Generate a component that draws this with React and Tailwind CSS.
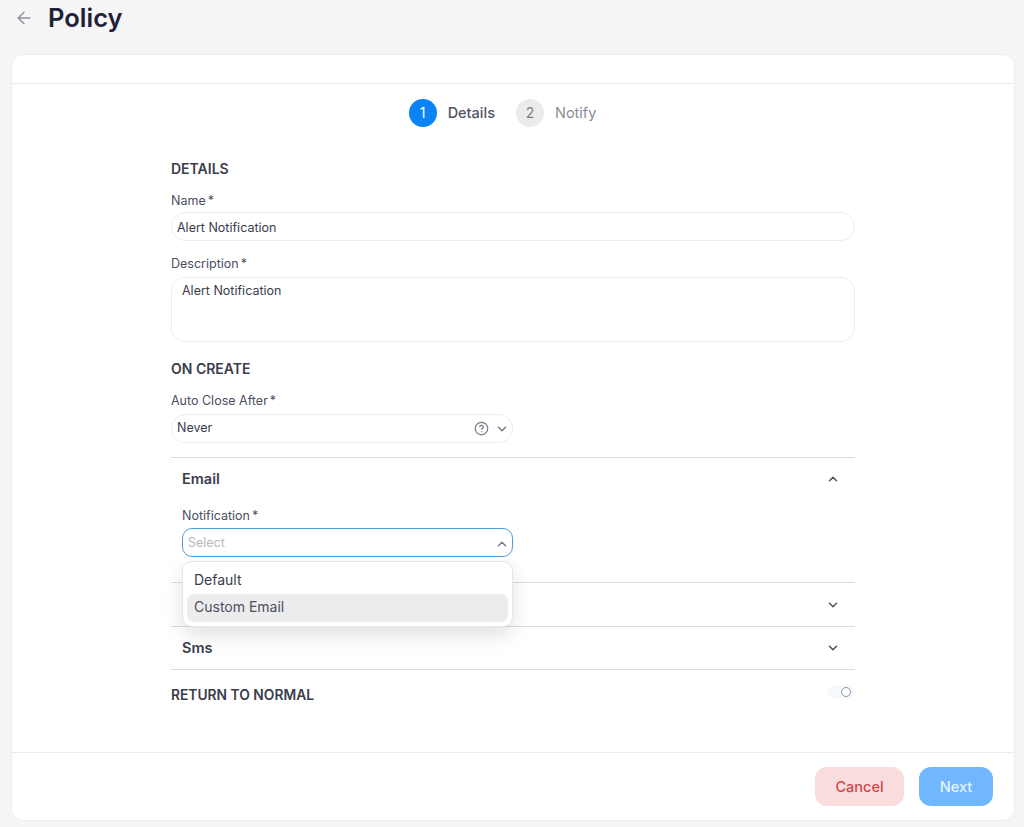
import { ArrowLeft, ChevronDown, ChevronUp, CircleHelp } from "lucide-react";

const Label = ({ children }) => (
  <div className="text-[12.5px] leading-[16px] text-[#4b4f5e]">
    {children}
    <span className="ml-[2px]">*</span>
  </div>
);

const AccordionRow = ({ title, open, small }) => (
  <div className={`flex items-center justify-between pl-[11px] pr-[15px] ${small ? "h-[42px]" : "h-[43px]"}`}>
    <span className="text-[14.5px] font-semibold text-[#3a3d4b]">{title}</span>
    {open ? (
      <ChevronUp className="h-[14px] w-[14px] text-[#4b4f5e]" strokeWidth={2.5} />
    ) : (
      <ChevronDown className="h-[14px] w-[14px] text-[#4b4f5e]" strokeWidth={2.5} />
    )}
  </div>
);

const App = () => {
  return (
    <div className="h-[827px] w-[1024px] overflow-hidden bg-[#f5f5f6] font-['Inter',sans-serif]">
      <div className="flex h-[54px] items-start pl-[14px] pt-[2px]">
        <ArrowLeft className="mt-[6px] h-[20px] w-[20px] text-[#8e909a]" strokeWidth={1.6} />
        <h1 className="ml-[14px] text-[25.5px] font-semibold leading-[32px] text-[#1e2238]">Policy</h1>
      </div>

      <div className="mx-[11px] flex h-[767px] w-[1004px] flex-col rounded-[12px] border border-[#eeeeef] bg-white">
        <div className="h-[29px] border-b border-[#ececed]"></div>

        <div className="flex-1">
          <div className="flex h-[57px] items-center justify-center pr-[21px]">
            <div className="flex h-[28px] w-[28px] items-center justify-center rounded-full bg-[#0a84f5] text-[14px] text-white">1</div>
            <span className="ml-[11px] text-[14.5px] font-medium text-[#4f5262]">Details</span>
            <div className="ml-[21px] flex h-[28px] w-[28px] items-center justify-center rounded-full bg-[#ebebeb] text-[14px] text-[#7d7f88]">2</div>
            <span className="ml-[11px] text-[14.5px] text-[#8a8c94]">Notify</span>
          </div>

          <div className="ml-[159px] w-[684px]">
            <h2 className="mt-[18px] text-[14px] font-semibold leading-[20px] text-[#3a3d4b]">DETAILS</h2>
            <div className="mt-[14px]">
              <Label>Name</Label>
            </div>
            <div className="mt-[3px] flex h-[29px] items-center rounded-[14px] border border-[#ececed] pl-[5px] pt-[3px] text-[12.5px] text-[#3a3d4b]">
              Alert Notification
            </div>
            <div className="mt-[15px]">
              <Label>Description</Label>
            </div>
            <div className="mt-[5px] h-[65px] rounded-[14px] border border-[#ececed] pl-[10px] pt-[4px] text-[12.5px] leading-[18px] text-[#3a3d4b]">
              Alert Notification
            </div>

            <h2 className="mt-[17px] text-[14px] font-semibold leading-[20px] text-[#3a3d4b]">ON CREATE</h2>
            <div className="mt-[14px]">
              <Label>Auto Close After</Label>
            </div>
            <div className="mt-[5px] flex h-[29px] w-[342px] items-center justify-between rounded-[14px] border border-[#ececed] pl-[5px] pr-[3px] text-[12.5px] text-[#3a3d4b]">
              Never
              <span className="flex items-center gap-[6px] text-[#77798a]">
                <CircleHelp className="h-[15px] w-[15px]" />
                <ChevronDown className="h-[14px] w-[14px]" strokeWidth={2.5} />
              </span>
            </div>

            <div className="mt-[14px] border-t border-[#dcdcdd]">
              <AccordionRow title="Email" open small />
              <div className="relative h-[82px] pl-[11px]">
                <div className="pt-[8px]">
                  <Label>Notification</Label>
                </div>
                <div className="mt-[4px] flex h-[29px] w-[331px] items-center justify-between rounded-[10px] border-[1.5px] border-[#4a9fe0] pl-[5px] pr-[3px] pt-[2px] text-[12.5px] text-[#b9bbc2]">
                  Select
                  <ChevronUp className="h-[14px] w-[14px] text-[#77798a]" strokeWidth={2.5} />
                </div>
                <div className="absolute left-[11px] top-[61px] z-10 h-[66px] w-[331px] rounded-[10px] border border-[#e6e6e8] bg-white px-[4px] pt-[4px] text-[14px] text-[#3a3d4b] shadow-[0_8px_20px_rgba(0,0,0,0.12)]">
                  <div className="flex h-[28px] items-center pb-[2px] pl-[7px]">Default</div>
                  <div className="flex h-[28px] items-center rounded-[7px] bg-[#ececec] pb-[3px] pl-[7px] text-[#4b4f5e]">Custom Email</div>
                </div>
              </div>
            </div>
            <div className="border-t border-[#dcdcdd]">
              <AccordionRow title="" />
            </div>
            <div className="border-t border-[#dcdcdd]">
              <AccordionRow title="Sms" small />
            </div>
            <div className="flex h-[49px] items-center justify-between border-t border-[#dcdcdd]">
              <span className="pt-[2px] text-[13.8px] font-semibold text-[#3a3d4b]">RETURN TO NORMAL</span>
              <span className="mb-[5px] mr-[1px] flex h-[14px] w-[27px] items-center justify-end rounded-full bg-[#f7fafd] pr-[3px]">
                <span className="h-[10px] w-[10px] rounded-full border border-[#8a98a8] bg-white"></span>
              </span>
            </div>
          </div>
        </div>

        <div className="flex h-[68px] items-start justify-end gap-[15px] border-t border-[#ececed] pr-[21px] pt-[14px]">
          <button className="h-[39px] w-[89px] rounded-[12px] bg-[#f9dddd] text-[14.5px] font-medium text-[#d0474c]">Cancel</button>
          <button className="h-[39px] w-[74px] rounded-[12px] bg-[#70b7ff] text-[14.5px] font-medium text-[#e6f3ff]">Next</button>
        </div>
      </div>
    </div>
  );
};

export default App;
